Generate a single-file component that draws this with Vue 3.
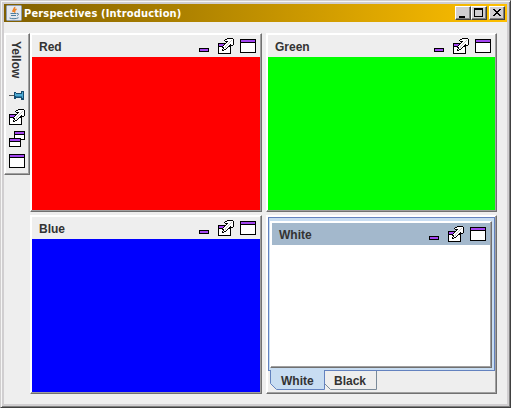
<script setup>
import { h } from 'vue'

const r = (x, y, w, ht, fill) => h('rect', { x, y, width: w, height: ht, fill })
const frame = (x, y, w, ht) => [
  r(x, y, w, ht, '#000'),
  r(x + 1, y + 4, w - 2, ht - 5, '#fff'),
  r(x + 1, y + 1, w - 2, 2, '#a345f0'),
]
const palette = { '#': '#000', w: '#fff', g: '#c4c4c4' }
const pixels = (rows) =>
  rows.flatMap((row, y) => [...row].map((c, x) => (palette[c] ? r(x, y, 1, 1, palette[c]) : null)))
const arrow = [
  '.........######.',
  '.......##wwwwww#',
  '......#wwwwwwgw#',
  '.......###wwgww#',
  '........#wwgwww#',
  '.......#wwgwwww#',
  '......#wwgww#ww#',
  '.....#wwgww#.##.',
  '....#wwgww#.....',
  '....##wgw#......',
  '....w#ww#.......',
  '....#w##........',
  '....##..........',
]
const shapes = {
  min: () => [r(3, 10, 10, 4, '#000'), r(4, 11, 8, 2, '#a345f0')],
  undock: () => [...frame(0, 5, 13, 11), ...pixels(arrow)],
  restore: () => [...frame(5, 0, 11, 9), ...frame(0, 7, 12, 9)],
  max: () => frame(0, 1, 16, 14),
}
const Icon = (props) =>
  h('svg', { width: 16, height: 16, 'shape-rendering': 'crispEdges' }, shapes[props.name]())
Icon.props = ['name']

const views = [
  { title: 'Red', cls: 'red' },
  { title: 'Green', cls: 'green' },
  { title: 'Blue', cls: 'blue' },
]
const actions = ['min', 'undock', 'max']
</script>

<template>
  <div class="window">
    <header class="titlebar">
      <svg class="java" width="16" height="16">
        <rect x=".5" y=".5" width="15" height="15" rx="1" fill="#e4e8ee" stroke="#8f9daf" />
        <path d="M8.5 2c1 1.5-2.5 2.5-1.2 5M10.5 4C8 5.3 8.2 6 9 7.7" fill="none" stroke="#ed8428" stroke-width="1.6" />
        <path d="M4.5 8.5h6M5 10.5h5M3.5 13c2 1 7 1 9-.3M11 8.5c2-.5 2 1.5 0 2" fill="none" stroke="#4f7d9e" />
      </svg>
      <h1>Perspectives (Introduction)</h1>
      <div class="buttons">
        <button><svg width="14" height="12" shape-rendering="crispEdges"><rect x="3" y="9" width="6" height="2" /></svg></button>
        <button><svg width="14" height="12" shape-rendering="crispEdges"><path d="M2 1h9v9H2zM3 3v6h7V3z" fill-rule="evenodd" /></svg></button>
        <button class="close"><svg width="14" height="12" shape-rendering="crispEdges"><path d="M3 2h2v1h1v1h2V3h1V2h2v1h-1v1H9v1H8v1h1v1h1v1h1v1H9V8H8V7H6v1H5v1H3V8h1V7h1V6h1V5H5V4H4V3H3z" /></svg></button>
      </div>
    </header>

    <main class="content">
      <aside class="sidebar">
        <span class="vertical">Yellow</span>
        <svg class="pin" width="16" height="10" shape-rendering="crispEdges">
          <path d="M0 4h6v1H0z" fill="#555" />
          <path d="M5 1h2v1h5V0h3v9h-3V7H7v1H5z" fill="#174d70" />
          <path d="M6 2h1v1h6V1h1v6h-1V5H6z" fill="#4da9d2" />
          <path d="M7 5h6v1H7z" fill="#2879a6" />
        </svg>
        <Icon name="undock" /><Icon name="restore" /><Icon name="max" />
      </aside>

      <div class="grid">
        <section v-for="v in views" :key="v.title" class="view">
          <div class="head"><span>{{ v.title }}</span><Icon v-for="a in actions" :key="a" :name="a" /></div>
          <div class="body" :class="v.cls"></div>
        </section>
        <section class="view tabbed">
          <div class="tabpane">
            <div class="view inner">
              <div class="head active"><span>White</span><Icon v-for="a in actions" :key="a" :name="a" /></div>
              <div class="body white"></div>
            </div>
          </div>
          <nav class="tabs">
            <div class="tab selected">
              <svg width="55" height="20"><path d="M.5 0v13.5l6 6h48V0" fill="#c8ddf2" stroke="#6382bf" /></svg>
              <span>White</span>
            </div>
            <div class="tab">
              <svg width="53" height="20"><path d="M-.5 13.5l6 6h46V1" fill="none" stroke="#7a8a99" /></svg>
              <span>Black</span>
            </div>
          </nav>
        </section>
      </div>
    </main>
  </div>
</template>

<style>
body { background: #eee; overflow: hidden; }
</style>
<style scoped>
* { box-sizing: border-box; }
.window {
  width: 511px; height: 408px; background: #eee; display: flex; flex-direction: column;
  border: 1px solid; border-color: #d0cece #404040 #404040 #d0cece;
  box-shadow: inset 1px 1px #f5f5f5, inset -1px -1px #808080, inset 3px 3px #d0ced0, inset -3px -3px #d0ced0;
  padding: 3px; font: bold 12px "Liberation Sans", Arial, sans-serif; color: #333;
}
.titlebar {
  height: 18px; display: flex; align-items: center; padding: 0 2px;
  background: linear-gradient(90deg, #805f00, #ffc000);
}
h1 {
  flex: 1; margin: 0 0 0 2px; font: bold 11px "DejaVu Sans Condensed", "DejaVu Sans", sans-serif;
  letter-spacing: .16px; color: #fff; white-space: nowrap;
}
.buttons { display: flex; }
button {
  width: 16px; height: 14px; padding: 0; border: 1px solid; background: #d0ced0;
  border-color: #fff #404040 #404040 #fff; box-shadow: inset -1px -1px #808080;
}
button svg { display: block; }
.close { margin-left: 2px; }
.content { display: flex; align-items: flex-start; padding-top: 11px; }
.sidebar, .view {
  display: flex; flex-direction: column; padding: 1px; background: #eee;
  border: 1px solid; border-color: #fff #707070 #707070 #fff;
  box-shadow: inset -1px -1px #a0a0a0, inset 1px 1px #fff;
}
.sidebar { width: 26px; height: 142px; align-items: center; padding-top: 7px; gap: 6px; }
.vertical { writing-mode: vertical-rl; line-height: 14px; height: 44px; margin-right: 2px; }
.pin { margin: 0 0 2px; }
.grid {
  display: grid; grid-template-columns: 232px 231px; grid-template-rows: 179px 179px; gap: 3px 4px;
}
.view { min-width: 0; }
.head { height: 22px; flex: none; display: flex; align-items: center; padding: 0 4px 0 7px; gap: 6px; }
.head span { flex: 1; padding-top: 2px; }
.body { flex: 1; }
.red { background: #f00; }
.green { background: #0f0; }
.blue { background: #00f; }
.white { background: #fff; }
.active { background: #a3b8cc; }
.tabpane {
  height: 154px; border: 1px solid #6382bf; background: #c8ddf2; padding: 3px 2px 2px 1px; display: flex;
}
.inner { flex: 1; }
.tabs { display: flex; padding-left: 2px; margin-top: -1px; }
.tab { position: relative; height: 20px; }
.tab svg { display: block; }
.tab span { position: absolute; left: 9px; top: 4px; line-height: 14px; }
.tab.selected span { left: 11px; }
</style>
